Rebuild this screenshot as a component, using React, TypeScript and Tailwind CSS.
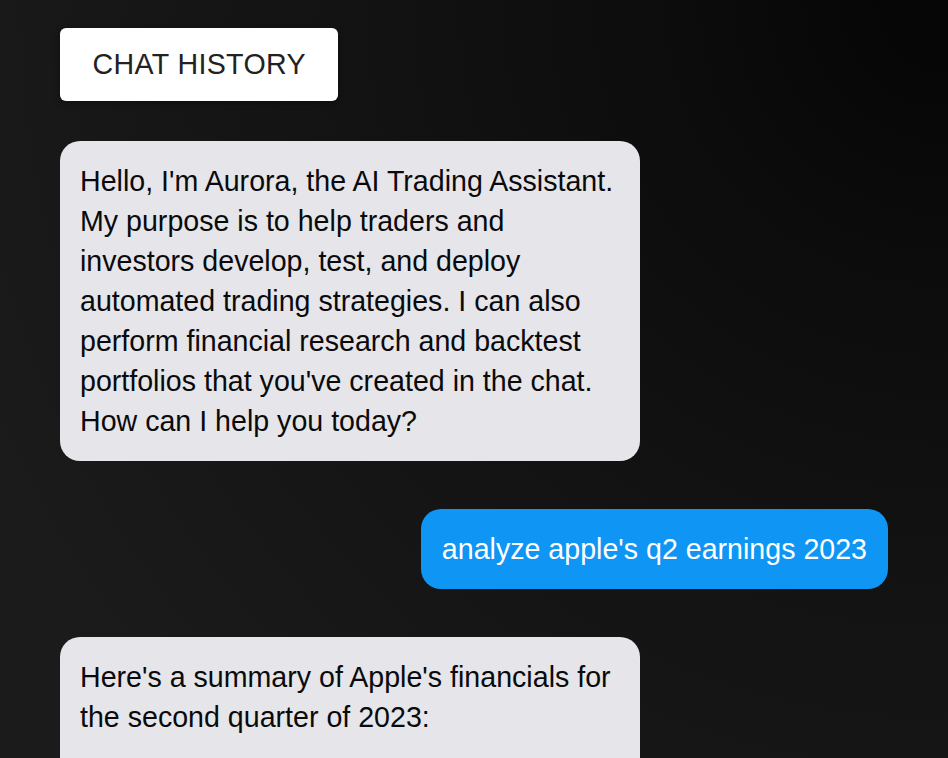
import React from 'react';

type Message = {
    role: 'assistant' | 'user';
    text: string;
};

const messages: Message[] = [
    {
        role: 'assistant',
        text: "Hello, I'm Aurora, the AI Trading Assistant. My purpose is to help traders and investors develop, test, and deploy automated trading strategies. I can also perform financial research and backtest portfolios that you've created in the chat. How can I help you today?",
    },
    { role: 'user', text: "analyze apple's q2 earnings 2023" },
    {
        role: 'assistant',
        text: "Here's a summary of Apple's financials for the second quarter of 2023:",
    },
];

export default function App() {
    return (
        <div
            className="h-[758px] w-full overflow-hidden bg-[#1b1b1b] bg-[radial-gradient(circle_at_100%_0%,#050505_0%,#0e0e0e_30%,#151515_60%,#1b1b1b_90%)] px-[60px] pt-7"
            style={{ fontFamily: '"Liberation Sans", Arial, Helvetica, sans-serif' }}
        >
            <button
                type="button"
                className="h-[73px] rounded-md bg-white px-[32.5px] text-[28.6px] tracking-[0.35px] text-[#222] shadow-[0_2px_6px_rgba(0,0,0,0.35)]"
            >
                CHAT HISTORY
            </button>

            <div className="mt-10 flex flex-col text-[28.6px] leading-10">
                <div className="flex justify-start">
                    <div className="w-[580px] rounded-[20px] bg-[#e5e5ea] p-5 text-[#0a0a0a]">
                        {messages[0].text}
                    </div>
                </div>

                <div className="mt-12 flex justify-end">
                    <div className="rounded-[20px] bg-[#0f95f4] px-[21px] py-5 text-white">
                        {messages[1].text}
                    </div>
                </div>

                {/* last reply runs past the bottom of the window */}
                <div className="mt-12 flex justify-start">
                    <div className="w-[580px] rounded-[20px] bg-[#e5e5ea] px-5 pt-5 pb-[140px] text-[#0a0a0a]">
                        {messages[2].text}
                    </div>
                </div>
            </div>
        </div>
    );
}
